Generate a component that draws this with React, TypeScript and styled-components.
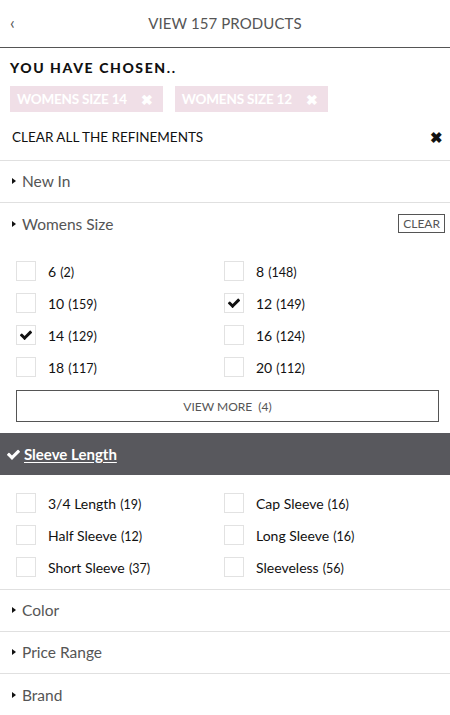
import React from "react";
import styled, { createGlobalStyle } from "styled-components";

const Global = createGlobalStyle`
  html, body { margin: 0; padding: 0; background: #fff; }
  body { font-family: Lato, "Open Sans", Arial, sans-serif; color: #222; }
  * { box-sizing: border-box; }
`;

const Page = styled.div`
  width: 450px;
  background: #fff;
`;

const Header = styled.div`
  height: 48px;
  display: flex;
  align-items: center;
  justify-content: center;
  position: relative;
  border-bottom: 1px solid #555;
`;

const Back = styled.span`
  position: absolute;
  left: 10px;
  top: 12px;
  font-size: 17px;
  color: #555;
`;

const HeaderTitle = styled.div`
  font-size: 15px;
  color: #555;
  letter-spacing: 0.1px;
  margin-top: -1px;
`;

const Chosen = styled.div`
  padding: 12px 10px 0;
`;

const ChosenTitle = styled.div`
  font-size: 14px;
  font-weight: 900;
  letter-spacing: 1.6px;
  color: #111;
  line-height: 16px;
`;

const Chips = styled.div`
  display: flex;
  gap: 12px;
  margin-top: 10px;
`;

const Chip = styled.div`
  height: 26px;
  background: #f0dfe7;
  color: #fff;
  font-weight: 700;
  font-size: 13.5px;
  display: flex;
  align-items: center;
  padding: 0 10px 0 7px;
  gap: 14px;
  letter-spacing: -0.2px;
`;

const ChipX = styled.span`
  font-size: 14px;
  font-weight: 900;
`;

const ClearAll = styled.div`
  height: 49px;
  display: flex;
  align-items: center;
  justify-content: space-between;
  padding: 2px 7px 0 12px;
  border-bottom: 1px solid #e0e0e0;
  font-size: 13.5px;
  color: #111;
`;

const ClearX = styled.span`
  font-size: 15px;
  font-weight: 900;
`;

const FacetHead = styled.div<{ $border?: boolean }>`
  height: 42px;
  display: flex;
  align-items: center;
  justify-content: space-between;
  padding: 0 5px 1px 12px;
  border-bottom: ${(p) => (p.$border ? "1px solid #e0e0e0" : "none")};
  font-size: 15.5px;
  color: #555;
`;

const FacetLabel = styled.div`
  display: flex;
  align-items: center;
  gap: 6px;
`;

const Arrow = styled.span`
  width: 0;
  height: 0;
  border-top: 3.5px solid transparent;
  border-bottom: 3.5px solid transparent;
  border-left: 4px solid #111;
`;

const ClearBtn = styled.span`
  border: 1px solid #555;
  font-size: 12px;
  color: #555;
  padding: 1px 4px;
  line-height: 15px;
`;

const Options = styled.div<{ $pt: number; $pb: number; $border?: boolean }>`
  padding: ${(p) => p.$pt}px 11px ${(p) => p.$pb}px 16px;
  border-bottom: ${(p) => (p.$border ? "1px solid #e0e0e0" : "none")};
`;

const Grid = styled.div`
  display: grid;
  grid-template-columns: 208px 1fr;
  row-gap: 12px;
`;

const Item = styled.div`
  display: flex;
  align-items: center;
  gap: 12px;
  height: 20px;
`;

const Box = styled.span`
  width: 20px;
  height: 20px;
  border: 1px solid #e2e2e2;
  display: flex;
  align-items: center;
  justify-content: center;
`;

const Label = styled.span`
  margin-top: -1px;
`;

const Name = styled.span`
  font-size: 14px;
  color: #111;
`;

const Count = styled.span`
  font-size: 12.5px;
  color: #111;
`;

const ViewMore = styled.div`
  margin-top: 13px;
  height: 32px;
  border: 1px solid #555;
  display: flex;
  align-items: center;
  justify-content: center;
  font-size: 12px;
  color: #555;
`;

const DarkBar = styled.div`
  height: 42px;
  background: #58585d;
  display: flex;
  align-items: center;
  padding-left: 6px;
  gap: 3px;
  color: #fff;
`;

const DarkTitle = styled.span`
  font-size: 15px;
  font-weight: 700;
  text-decoration: underline;
  text-underline-offset: 2px;
  margin-top: -1px;
`;

const Check = ({ size = 14, color = "#111" }: { size?: number; color?: string }) => (
  <svg width={size} height={size} viewBox="0 0 1792 1792">
    <path
      fill={color}
      d="M1671 566q0 40-28 68l-724 724-136 136q-28 28-68 28t-68-28l-136-136-362-362q-28-28-28-68t28-68l136-136q28-28 68-28t68 28l294 295 656-657q28-28 68-28t68 28l136 136q28 28 28 68z"
    />
  </svg>
);

const Option = ({ name, count, checked }: { name: string; count: number; checked?: boolean }) => (
  <Item>
    <Box>{checked && <Check size={14} />}</Box>
    <Label>
      <Name>{name}</Name> <Count>({count})</Count>
    </Label>
  </Item>
);

const Facet = ({ title, border = true, clear }: { title: string; border?: boolean; clear?: boolean }) => (
  <FacetHead $border={border}>
    <FacetLabel>
      <Arrow />
      {title}
    </FacetLabel>
    {clear && <ClearBtn>CLEAR</ClearBtn>}
  </FacetHead>
);

const sizes: [string, number, boolean?][] = [
  ["6", 2],
  ["8", 148],
  ["10", 159],
  ["12", 149, true],
  ["14", 129, true],
  ["16", 124],
  ["18", 117],
  ["20", 112],
];

const sleeves: [string, number][] = [
  ["3/4 Length", 19],
  ["Cap Sleeve", 16],
  ["Half Sleeve", 12],
  ["Long Sleeve", 16],
  ["Short Sleeve", 37],
  ["Sleeveless", 56],
];

export default function App() {
  return (
    <Page>
      <Global />
      <Header>
        <Back>‹</Back>
        <HeaderTitle>VIEW 157 PRODUCTS</HeaderTitle>
      </Header>
      <Chosen>
        <ChosenTitle>YOU HAVE CHOSEN..</ChosenTitle>
        <Chips>
          <Chip>
            WOMENS SIZE 14 <ChipX>✖</ChipX>
          </Chip>
          <Chip>
            WOMENS SIZE 12 <ChipX>✖</ChipX>
          </Chip>
        </Chips>
      </Chosen>
      <ClearAll>
        CLEAR ALL THE REFINEMENTS
        <ClearX>✖</ClearX>
      </ClearAll>
      <Facet title="New In" />
      <Facet title="Womens Size" border={false} clear />
      <Options $pt={16} $pb={11}>
        <Grid>
          {sizes.map(([n, c, ch]) => (
            <Option key={n} name={n} count={c} checked={ch} />
          ))}
        </Grid>
        <ViewMore>VIEW MORE&nbsp;&nbsp;(4)</ViewMore>
      </Options>
      <DarkBar>
        <Check size={15} color="#fff" />
        <DarkTitle>Sleeve Length</DarkTitle>
      </DarkBar>
      <Options $pt={18} $pb={12} $border>
        <Grid>
          {sleeves.map(([n, c]) => (
            <Option key={n} name={n} count={c} />
          ))}
        </Grid>
      </Options>
      <Facet title="Color" />
      <Facet title="Price Range" />
      <Facet title="Brand" border={false} />
    </Page>
  );
}
